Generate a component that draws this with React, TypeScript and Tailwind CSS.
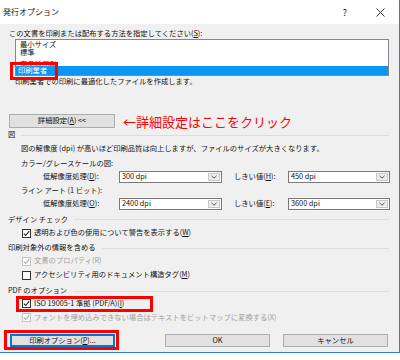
import React from "react";

const U = ({ c }: { c: string }) => <span className="underline">{c}</span>;

function Check({ checked, disabled }: { checked?: boolean; disabled?: boolean }) {
  return (
    <span
      className={
        "flex h-[9px] w-[9px] shrink-0 items-center justify-center border bg-white " +
        (disabled ? "border-[#c4c4c4]" : "border-[#333333]")
      }
    >
      {checked && (
        <svg width="7" height="7" viewBox="0 0 7 7">
          <path
            d="M0.8 3.6 L2.7 5.5 L6.2 1.2"
            fill="none"
            stroke={disabled ? "#a8a8a8" : "#222"}
            strokeWidth="1.1"
          />
        </svg>
      )}
    </span>
  );
}

function Select({ value, w }: { value: string; w: string }) {
  return (
    <div className={"flex h-[12px] items-stretch border border-[#7a7a7a] bg-white " + w}>
      <span className="flex flex-1 items-center pl-[2px] leading-none">{value}</span>
      <span className="m-[1px] flex w-[12px] items-center justify-center border border-[#c8c8c8] bg-[#ececec]">
        <svg width="6" height="4" viewBox="0 0 6 4">
          <path d="M0.5 0.8 L3 3.2 L5.5 0.8" fill="none" stroke="#444" strokeWidth="0.9" />
        </svg>
      </span>
    </div>
  );
}

function Heading({ children, h }: { children: React.ReactNode; h: string }) {
  return (
    <div className={"flex items-center pl-[8px] pr-[10px] " + h}>
      <span className="leading-none">{children}</span>
      <div className="ml-[6px] h-px flex-1 bg-[#dcdcdc]" />
    </div>
  );
}

function CbRow({
  h,
  checked,
  disabled,
  children,
}: {
  h: string;
  checked?: boolean;
  disabled?: boolean;
  children: React.ReactNode;
}) {
  return (
    <div className={"flex items-center pl-[22px] " + h}>
      <Check checked={checked} disabled={disabled} />
      <span className={"ml-[3px] leading-none " + (disabled ? "text-[#a0a0a0]" : "")}>{children}</span>
    </div>
  );
}

export default function App() {
  return (
    <div className="relative h-[360px] w-[400px] overflow-hidden bg-white font-['Noto_Sans_CJK_JP','Noto_Sans',sans-serif] text-[7.3px] text-[#111]">
      <div className="flex h-[353px] w-[400px] flex-col border-b border-r border-[#2f7fd0]">
        {/* title bar */}
        <div className="flex h-[24px] items-center bg-white pl-[3px] pr-[9px]">
          <span className="text-[8px] leading-none">発行オプション</span>
          <div className="ml-auto flex items-center gap-[15px]">
            <span className="flex w-[20px] justify-center text-[9px] leading-none">?</span>
            <span className="flex w-[20px] justify-center">
              <svg width="9" height="9" viewBox="0 0 9 9">
                <path d="M0.5 0.5 L8.5 8.5 M8.5 0.5 L0.5 8.5" stroke="#222" strokeWidth="0.9" />
              </svg>
            </span>
          </div>
        </div>
        {/* body */}
        <div className="flex flex-1 flex-col bg-[#f0f0f0]">
          <div className="flex h-[15px] items-end pb-[1px] pl-[9px]">
            <span className="leading-[10px]">
              この文書を印刷または配布する方法を指定してください(<U c="S" />):
            </span>
          </div>
          <div className="mx-[10px] ml-[15px] flex h-[37px] flex-col border border-[#828790] bg-white pt-[1px]">
            <div className="flex h-[8px] items-center pl-[4px] leading-none">最小サイズ</div>
            <div className="flex h-[8px] items-center pl-[4px] leading-none">標準</div>
            <div className="h-[9px] overflow-hidden pl-[4px] leading-[14px]">高品質印刷</div>
            <div className="flex h-[9px] items-center bg-[#0a96f2] pl-[2px] leading-none text-white">印刷業者</div>
          </div>
          <div className="flex h-[12px] items-center pl-[15px]">
            <span className="leading-none">印刷業者での印刷に最適化したファイルを作成します。</span>
          </div>
          <div className="h-[26px]" />
          <div className="flex h-[14px] items-stretch pl-[9px]">
            <div className="flex w-[106px] items-center justify-center border border-[#adadad] bg-[#e1e1e1] leading-none">
              詳細設定(<U c="A" />) &lt;&lt;
            </div>
            <span className="ml-[8px] flex items-center text-[13px] leading-none text-[#ff0000]">
              ←詳細設定はここをクリック
            </span>
          </div>
          <Heading h="h-[14px]">図</Heading>
          <div className="flex h-[14px] items-center pl-[21px]">
            <span className="leading-none">
              図の解像度 (dpi) が高いほど印刷品質は向上しますが、ファイルのサイズが大きくなります。
            </span>
          </div>
          <div className="flex h-[15px] items-center pl-[21px]">
            <span className="leading-none">カラー/グレースケールの図:</span>
          </div>
          <div className="flex h-[12px] items-center pl-[43px]">
            <span className="w-[76px] leading-none">
              低解像度処理(<U c="D" />):
            </span>
            <Select value="300 dpi" w="w-[103px]" />
            <span className="ml-[12px] w-[54px] leading-none">
              しきい値(<U c="H" />):
            </span>
            <Select value="450 dpi" w="w-[102px]" />
          </div>
          <div className="flex h-[15px] items-center pl-[21px]">
            <span className="leading-none">ライン アート (1 ビット):</span>
          </div>
          <div className="flex h-[12px] items-center pl-[43px]">
            <span className="w-[76px] leading-none">
              低解像度処理(<U c="O" />):
            </span>
            <Select value="2400 dpi" w="w-[103px]" />
            <span className="ml-[12px] w-[54px] leading-none">
              しきい値(<U c="E" />):
            </span>
            <Select value="3600 dpi" w="w-[102px]" />
          </div>
          <div className="h-[3px]" />
          <Heading h="h-[13px]">デザイン チェック</Heading>
          <CbRow h="h-[14px]" checked>
            透明および色の使用について警告を表示する(<U c="W" />)
          </CbRow>
          <div className="h-[1px]" />
          <Heading h="h-[14px]">印刷対象外の情報を含める</Heading>
          <CbRow h="h-[12px]" checked disabled>
            文書のプロパティ(R)
          </CbRow>
          <CbRow h="h-[16px]">
            アクセシビリティ用のドキュメント構造タグ(<U c="M" />)
          </CbRow>
          <Heading h="h-[16px]">PDF のオプション</Heading>
          <CbRow h="h-[9px]" checked>
            ISO 19005-1 準拠 (PDF/A)(<U c="I" />)
          </CbRow>
          <CbRow h="h-[19px]" checked disabled>
            フォントを埋め込みできない場合はテキストをビットマップに変換する(X)
          </CbRow>
          <div className="h-[7px]" />
          <div className="flex h-[13px] items-stretch pl-[10px]">
            <div className="flex w-[105px] items-center justify-center border border-[#0078d7] bg-[#e1e1e1] leading-none shadow-[inset_0_0_0_1px_#0078d7]">
              印刷オプション(<U c="P" />)...
            </div>
            <div className="ml-[50px] flex w-[105px] items-center justify-center border border-[#adadad] bg-[#e1e1e1] leading-none">
              OK
            </div>
            <div className="ml-[13px] flex w-[105px] items-center justify-center border border-[#adadad] bg-[#e1e1e1] leading-none">
              キャンセル
            </div>
          </div>
        </div>
      </div>
      {/* red annotation boxes */}
      <div className="pointer-events-none absolute left-[10px] top-[62px] h-[18px] w-[48px] border-[3px] border-[#ff0000]" />
      <div className="pointer-events-none absolute left-[16px] top-[296px] h-[16px] w-[137px] border-[3px] border-[#ff0000]" />
      <div className="pointer-events-none absolute left-[4px] top-[330px] h-[20px] w-[115px] border-[3px] border-[#ff0000]" />
    </div>
  );
}
